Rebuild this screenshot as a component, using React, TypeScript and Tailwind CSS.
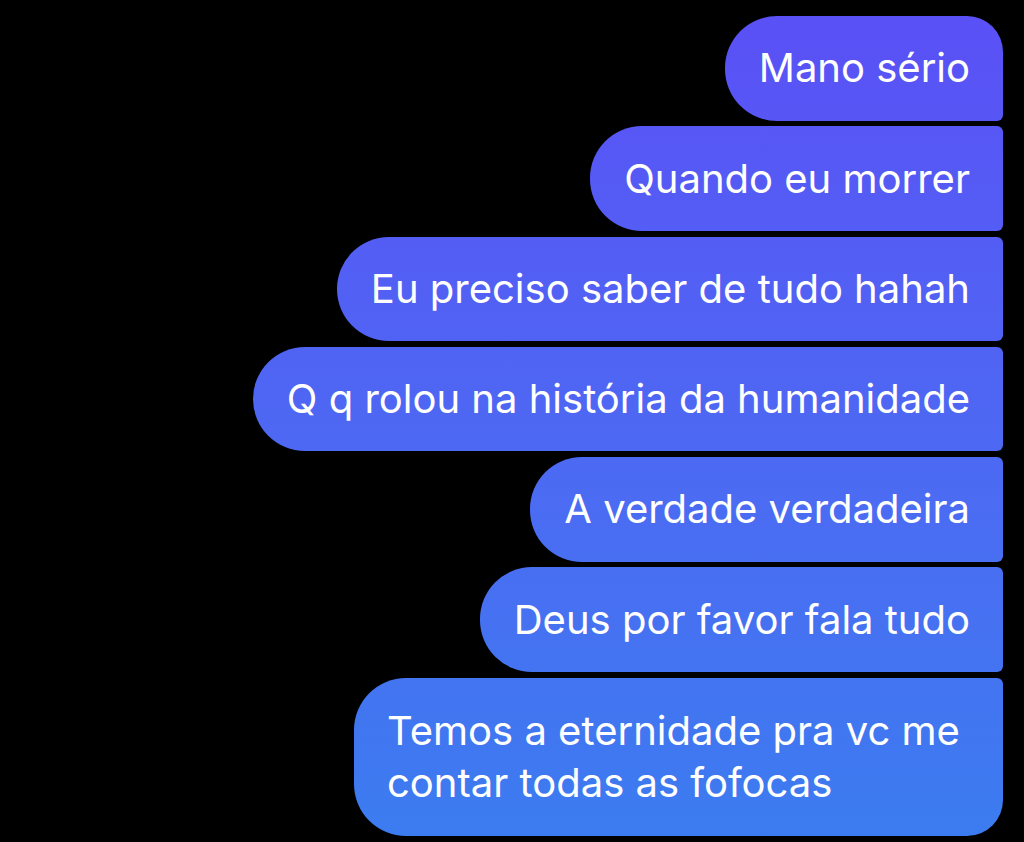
const messages = [
  "Mano sério",
  "Quando eu morrer",
  "Eu preciso saber de tudo hahah",
  "Q q rolou na história da humanidade",
  "A verdade verdadeira",
  "Deus por favor fala tudo",
];

export default function App() {
  return (
    <div
      className="min-h-[842px] w-[1024px] bg-black flex flex-col items-end gap-[5.8px] pt-[16px] pr-[21px] text-white"
      style={{ fontFamily: "Inter, 'Noto Sans', sans-serif" }}
    >
      {messages.map((m, i) => (
        <div
          key={m}
          className={
            "bg-fixed bg-linear-to-b from-[#5a4ff6] to-[#3b7cf0] rounded-l-[52px] h-[104.5px] flex items-center pl-[34px] pr-[33px] text-[40px] leading-[52px] whitespace-nowrap " +
            (i === 0 ? "rounded-tr-[36px] rounded-br-[6px]" : "rounded-r-[6px]")
          }
        >
          {m}
        </div>
      ))}
      <div className="bg-fixed bg-linear-to-b from-[#5a4ff6] to-[#3b7cf0] rounded-l-[52px] rounded-tr-[6px] rounded-br-[36px] pl-[33px] pr-[30px] py-[27px] text-[40px] leading-[52px] w-[649px]">
        Temos a eternidade pra vc me contar todas as fofocas
      </div>
    </div>
  );
}
